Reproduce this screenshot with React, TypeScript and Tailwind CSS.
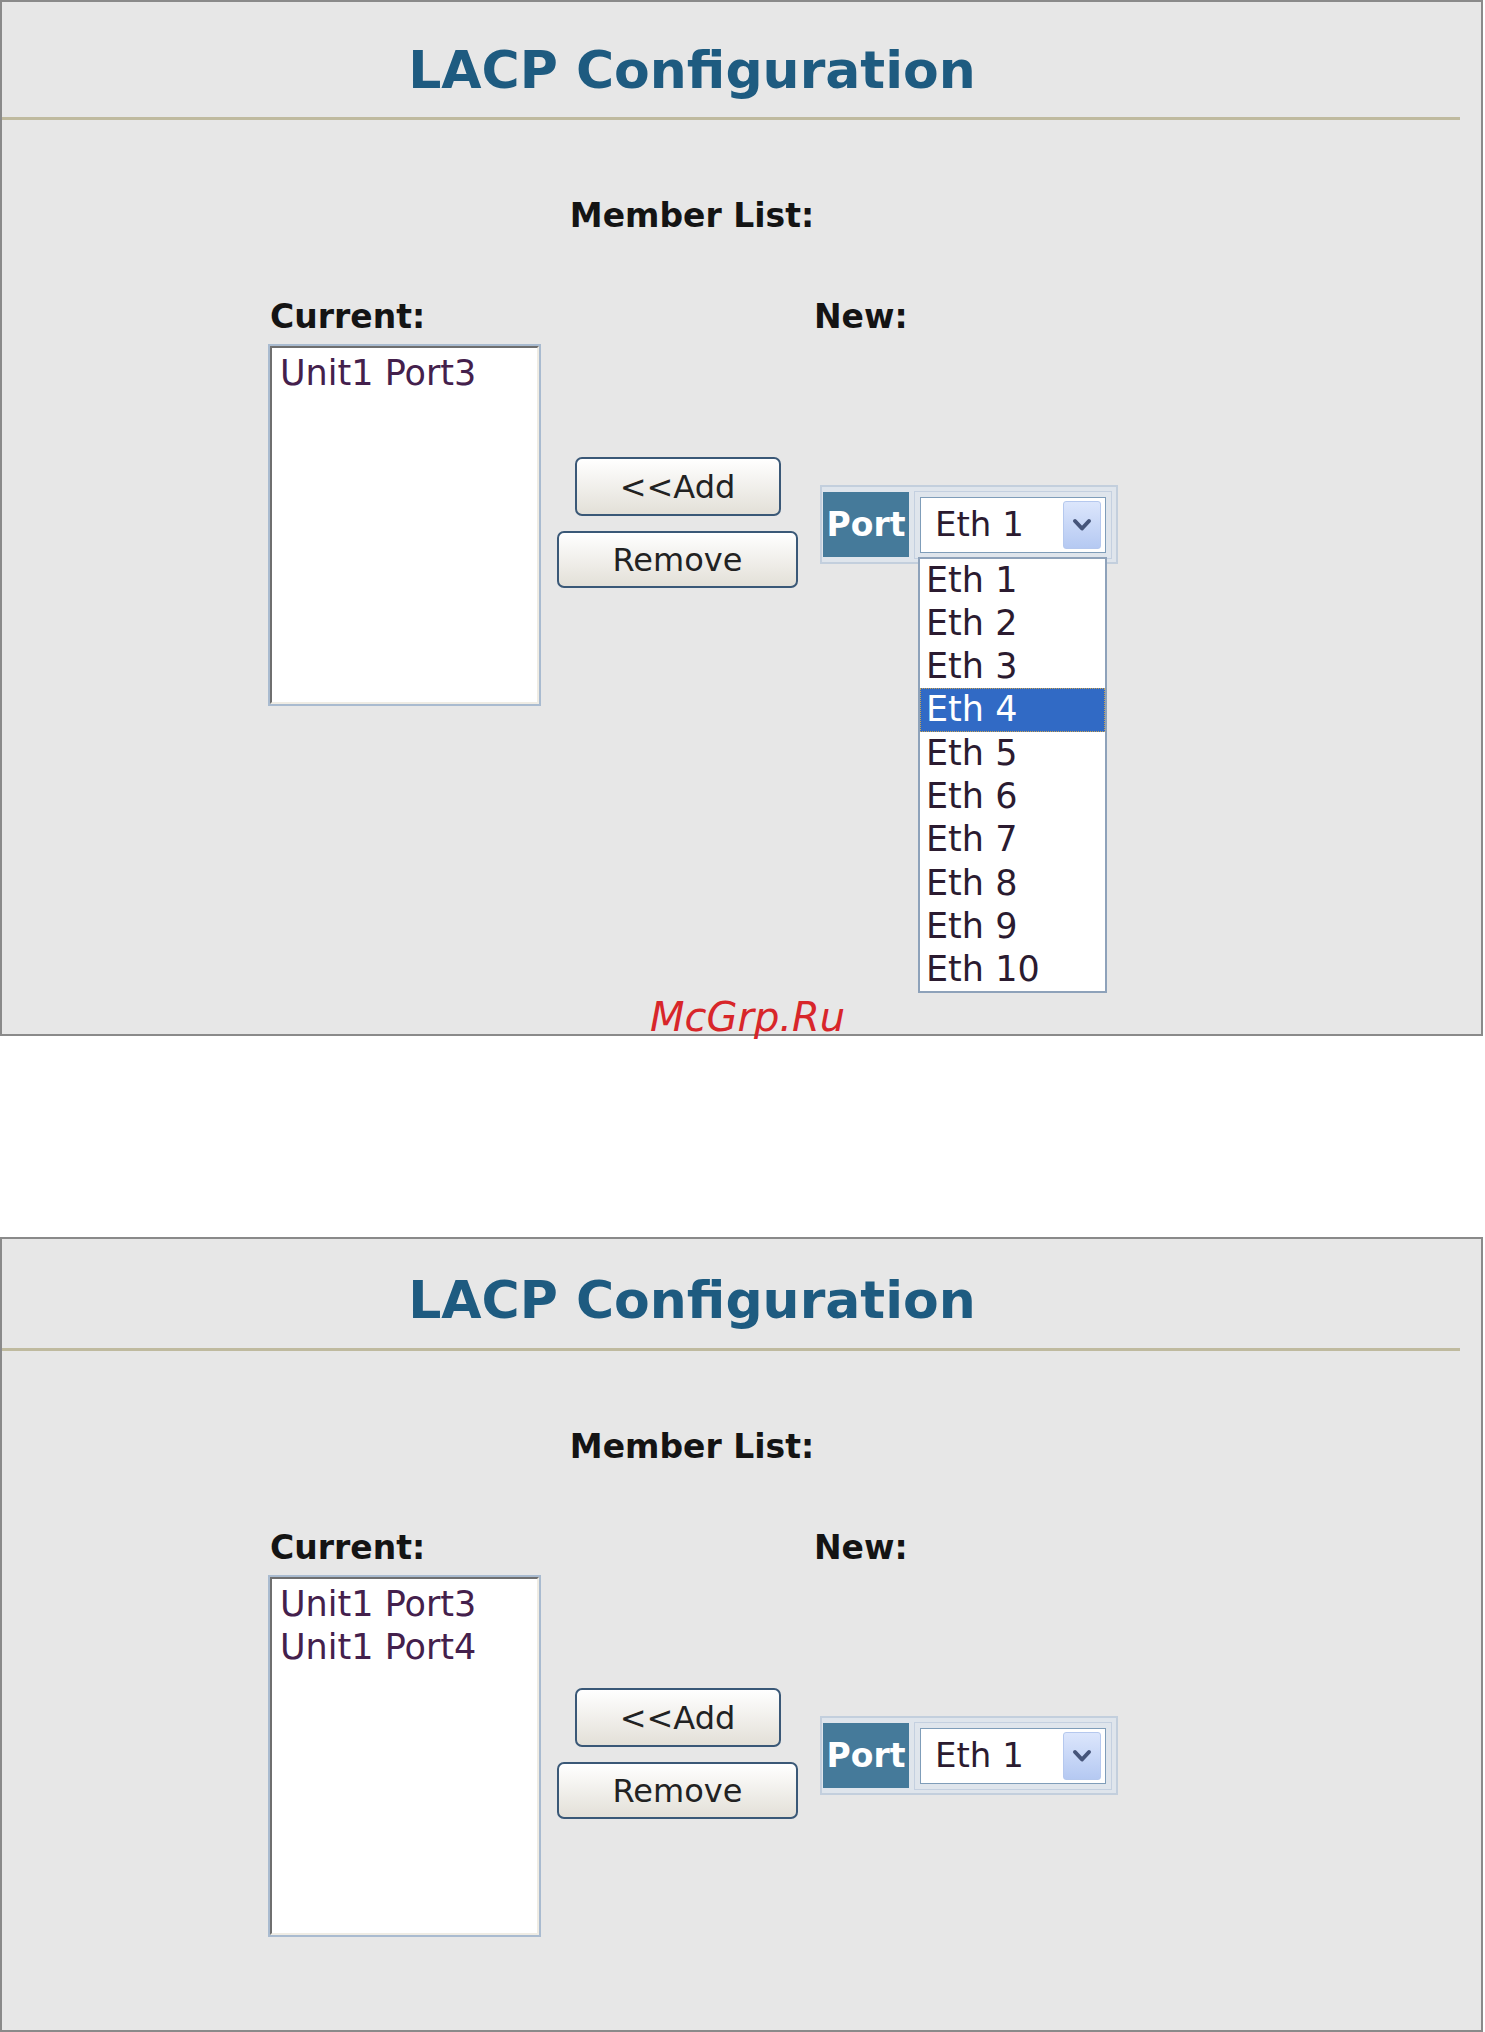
import React from 'react';

interface PanelProps {
  members: string[];
  open?: boolean;
  boxClass: string;
  titleClass: string;
  lineClass: string;
}

const ports = Array.from({ length: 10 }, (_, i) => `Eth ${i + 1}`);

// small "v" glyph on the select's arrow button
const Chevron = () => (
  <svg width="20" height="16" viewBox="0 0 20 16">
    <polyline
      points="3,4 10,11.5 17,4"
      fill="none"
      stroke="#46557a"
      strokeWidth="4"
      strokeLinecap="round"
      strokeLinejoin="round"
    />
  </svg>
);

const Panel = ({ members, open, boxClass, titleClass, lineClass }: PanelProps) => (
  <div
    className={`relative w-[1483px] border-2 border-[#8a8a8a] bg-[#e7e7e7] font-['DejaVu_Sans',Verdana,sans-serif] ${boxClass}`}
  >
    <div className={`w-[1380px] text-center text-[52px] leading-none font-bold text-[#1e5b80] ${titleClass}`}>
      LACP Configuration
    </div>
    <div className={`h-[3px] mr-[21px] bg-[#bfba9f] ${lineClass}`} />

    <div className="mt-[79px] w-[1380px] text-center text-[33px] leading-none font-bold text-[#141414]">
      Member List:
    </div>

    <div className="mt-[68px] flex text-[33px] leading-none font-bold text-[#141414]">
      <span className="ml-[268px] w-[544px]">Current:</span>
      <span>New:</span>
    </div>

    <div className="mt-[11px] ml-[266px] flex items-start">
      {/* current members list box */}
      <div className="w-[273px] h-[362px] border-2 border-[#a9bbd0]">
        <div className="h-full border-2 border-t-[#6f6f6f] border-l-[#6f6f6f] border-r-[#efece4] border-b-[#efece4] bg-white pl-[8px] pt-[4px] text-[35px] leading-[43px] text-[#44204c]">
          {members.map(m => (
            <div key={m}>{m}</div>
          ))}
        </div>
      </div>

      {/* add / remove */}
      <div className="w-[273px] flex flex-col items-center pt-[113px]">
        <button className="w-[206px] h-[59px] rounded-[7px] border-2 border-[#3a5877] bg-linear-to-b from-white to-[#e3e0d8] text-[32px] text-[#222222]">
          &lt;&lt;Add
        </button>
        <button className="mt-[15px] w-[241px] h-[57px] rounded-[7px] border-2 border-[#3a5877] bg-linear-to-b from-white to-[#e3e0d8] text-[32px] text-[#222222]">
          Remove
        </button>
      </div>

      {/* new port picker */}
      <div className="pt-[141px] pl-[6px]">
        <div className="w-[298px] h-[79px] border-2 border-[#c3cfdd] bg-[#dfe5ec] flex items-center pl-[1px]">
          <div className="w-[86px] h-[65px] bg-[#457a9a] flex items-center justify-center text-[33px] font-bold text-white">
            Port
          </div>
          <div className="ml-[5px] border border-[#c4d0e0] p-[5px]">
            <div className="relative w-[186px] h-[56px] border border-[#7f9db9] bg-white flex items-center">
              <span className="pl-[14px] text-[34px] text-[#2b1b30]">Eth 1</span>
              <div className="ml-auto mr-[4px] w-[38px] h-[48px] rounded-[3px] border border-[#b5c8ee] bg-linear-to-b from-[#dce6fc] to-[#b5c9f2] flex items-center justify-center">
                <Chevron />
              </div>

              {open && (
                <div className="absolute left-[-3px] top-[59px] w-[189px] border-2 border-[#8ea2ba] bg-white text-[35px] leading-[43.3px] text-[#2b1b30]">
                  {ports.map(p => (
                    <div
                      key={p}
                      className={
                        p === 'Eth 4'
                          ? 'pl-[6px] bg-[#316ac5] text-white outline-1 outline-dotted outline-[#c9a452] -outline-offset-1'
                          : 'pl-[6px]'
                      }
                    >
                      {p}
                    </div>
                  ))}
                </div>
              )}
            </div>
          </div>
        </div>
      </div>
    </div>

    {open && (
      <div className="absolute left-[648px] top-[995px] text-[40px] leading-none italic text-[#d8262a]">
        McGrp.Ru
      </div>
    )}
  </div>
);

const App = () => {
  return (
    <div className="w-[1485px] h-[2032px] bg-white overflow-hidden">
      <Panel
        members={['Unit1 Port3']}
        open
        boxClass="h-[1036px]"
        titleClass="pt-[42px]"
        lineClass="mt-[21px]"
      />
      <Panel
        members={['Unit1 Port3', 'Unit1 Port4']}
        boxClass="mt-[201px] h-[795px]"
        titleClass="pt-[35px]"
        lineClass="mt-[22px]"
      />
    </div>
  );
};

export default App;
